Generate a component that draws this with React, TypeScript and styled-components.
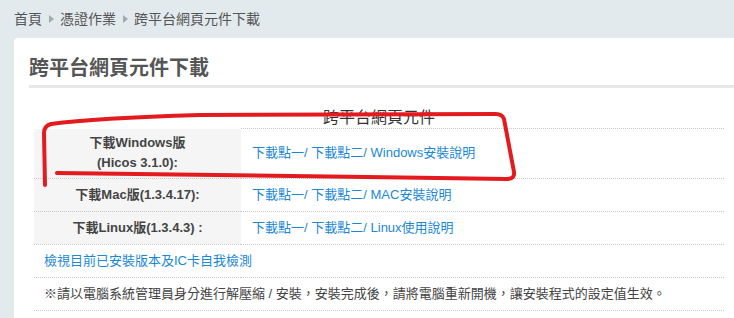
import styled, { createGlobalStyle } from "styled-components";

const GlobalStyle = createGlobalStyle`
  html, body {
    margin: 0;
    padding: 0;
    overflow: hidden;
    background: #e3eaed;
  }
  body {
    font-family: "Liberation Sans", "Noto Sans CJK TC", sans-serif;
    color: #444;
  }
`;

const rows = [
  { label: ["下載Windows版", "(Hicos 3.1.0):"], guide: "Windows安裝說明" },
  { label: ["下載Mac版(1.3.4.17):"], guide: "MAC安裝說明" },
  { label: ["下載Linux版(1.3.4.3) :"], guide: "Linux使用說明" },
];

function App(): React.ReactElement {
  return (
    <Page>
      <GlobalStyle />
      <Breadcrumb>
        <Crumb href="#">首頁</Crumb>
        <Arrow />
        <Crumb href="#">憑證作業</Crumb>
        <Arrow />
        <Crumb href="#">跨平台網頁元件下載</Crumb>
      </Breadcrumb>
      <Card>
        <Title>跨平台網頁元件下載</Title>
        <DownloadTable>
          <caption>跨平台網頁元件</caption>
          <tbody>
            {rows.map((row, i) => (
              <tr key={i}>
                <LabelCell $first={i === 0}>
                  {row.label.map((line) => (
                    <div key={line}>{line}</div>
                  ))}
                </LabelCell>
                <LinkCell $first={i === 0}>
                  <Link href="#">下載點一</Link>/ <Link href="#">下載點二</Link>/{" "}
                  <Link href="#">{row.guide}</Link>
                </LinkCell>
              </tr>
            ))}
            <tr>
              <WideCell colSpan={2}>
                <Link href="#">檢視目前已安裝版本及IC卡自我檢測</Link>
              </WideCell>
            </tr>
            <tr>
              <WideCell colSpan={2}>
                ※請以電腦系統管理員身分進行解壓縮 / 安裝，安裝完成後，請將電腦重新開機，讓安裝程式的設定值生效。
              </WideCell>
            </tr>
          </tbody>
        </DownloadTable>
      </Card>
      <Scribble viewBox="0 0 734 318" width="734" height="318">
        <path
          d="M57 173 L367 177 L507 179 Q515 179 514 172 L504 119 Q502 114 496 114 L200 115 Q95 118 51 124 Q44 126 44 133 L45 185"
          fill="none"
          stroke="#e31b1f"
          strokeWidth="4"
          strokeLinecap="round"
          strokeLinejoin="round"
        />
      </Scribble>
    </Page>
  );
}

const Page = styled.div`
  position: relative;
  width: 734px;
  height: 318px;
  overflow: hidden;
  padding: 9px 0 0 14px;
  box-sizing: border-box;
`;

const Breadcrumb = styled.nav`
  display: flex;
  align-items: center;
  height: 20px;
  font-size: 14px;
  line-height: 20px;
  margin-bottom: 9px;
`;

const Crumb = styled.a`
  color: #555;
  text-decoration: none;
`;

const Arrow = styled.span`
  width: 0;
  height: 0;
  margin: 0 6px 0 7px;
  border-top: 4px solid transparent;
  border-bottom: 4px solid transparent;
  border-left: 5px solid #a3a9ad;
`;

const Card = styled.section`
  width: 730px;
  box-sizing: border-box;
  background: #fff;
  border-radius: 4px 0 0 0;
  padding: 16px 5px 0 15px;
  height: 300px;
`;

const Title = styled.h2`
  margin: 0;
  font-size: 20px;
  line-height: 28px;
  font-weight: bold;
  color: #555;
  padding-bottom: 3px;
  border-bottom: 3px solid #e8e8e8;
`;

const DownloadTable = styled.table`
  width: 690px;
  margin: 20px 0 0 5px;
  border-collapse: collapse;
  font-size: 13px;

  caption {
    font-size: 16px;
    line-height: 20px;
    color: #333;
  }

  tr {
    border-bottom: 1px dotted #c8c8c8;
  }
`;

const LabelCell = styled.td<{ $first?: boolean }>`
  width: 207px;
  box-sizing: border-box;
  background: #f5f5f5;
  text-align: center;
  font-weight: bold;
  color: #444;
  line-height: 20px;
  padding: ${({ $first }) => ($first ? "4px 0 5px" : "6px 0")};
`;

const LinkCell = styled.td<{ $first?: boolean }>`
  padding: ${({ $first }) => ($first ? "4px 0 5px 11px" : "6px 0 6px 11px")};
  line-height: 20px;
  color: #1b88d4;
  border-top: ${({ $first }) => ($first ? "1px dotted #c8c8c8" : "none")};
`;

const WideCell = styled.td`
  padding: 6px 10px;
  line-height: 20px;
  color: #444;
`;

const Link = styled.a`
  color: #1b88d4;
  text-decoration: none;
`;

const Scribble = styled.svg`
  position: absolute;
  left: 0;
  top: 0;
  pointer-events: none;
`;

export default App;
